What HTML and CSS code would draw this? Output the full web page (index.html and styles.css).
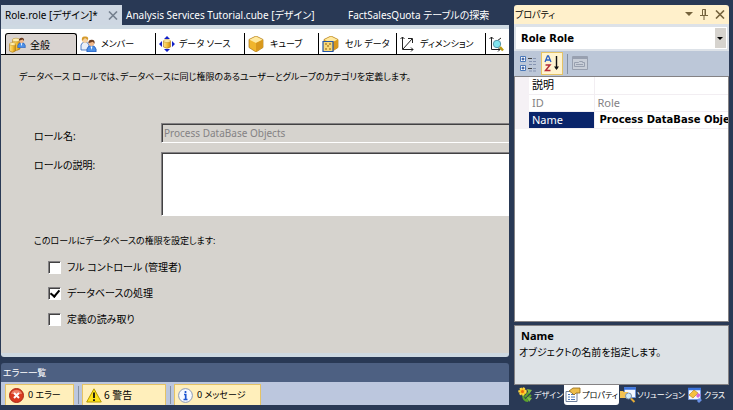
FILE: index.html
```html
<!DOCTYPE html>
<html lang="ja">
<head>
    <meta charset="UTF-8">
    <meta name="viewport" content="width=device-width, initial-scale=1.0">
    <title>Role.role [デザイン]</title>
    <link rel="stylesheet" href="styles.css">
</head>
<body>

<!-- Shared icons -->
<svg class="icon-defs" aria-hidden="true">
    <defs>
        <linearGradient id="gold" x1="0" x2="1">
            <stop offset="0" stop-color="#fbe28a"/>
            <stop offset="0.5" stop-color="#f6c33c"/>
            <stop offset="1" stop-color="#c88a10"/>
        </linearGradient>
        <symbol id="cube" viewBox="0 0 16 16">
            <path d="M8 0l7 3.500v8L8 16l-7-4.500v-8z" fill="#f0b52c" stroke="#a87414" stroke-width=".7"/>
            <path d="M8 .5l6.500 3.200L8 7 1.500 3.700z" fill="#ffe9a0"/>
            <path d="M8 7l6.700-3.300v7.600L8 15.500z" fill="#d9981c"/>
        </symbol>
        <symbol id="user" viewBox="0 0 12 14">
            <path d="M1 14v-3q1-4 5-4t5 4v3z" fill="#4c8fe6" stroke="#1d55b5" stroke-width=".8"/>
            <path d="M5 8h2l-1 4z" fill="#fff"/>
            <circle cx="6" cy="4.500" r="3" fill="#f2b98b"/>
            <path d="M2.500 4.500Q2.500.5 6.500.7 10 1 9.300 5L7.500 3z" fill="#6d3d22"/>
        </symbol>
    </defs>
</svg>

<main class="workspace">
    <section class="document">
        <nav class="doc-tabs">
            <button class="doc-tab active">Role.role [デザイン]*
                <svg width="10" height="9" viewBox="0 0 10 9"><path d="M1 .5l8 8M9 .5l-8 8" stroke="#75808f" stroke-width="1.600"/></svg>
            </button>
            <button class="doc-tab cube-tab">Analysis Services Tutorial.cube [デザイン]</button>
            <button class="doc-tab">FactSalesQuota テーブルの探索</button>
        </nav>

        <div class="designer">
            <div class="page-tabs">
                <button class="page-tab general active">
                    <svg width="17" height="16" viewBox="0 0 17 16">
                        <path d="M3.500 3v9q3.500 3 7.500 0V3z" fill="url(#gold)" stroke="#a87414" stroke-width=".6"/>
                        <ellipse cx="7" cy="3" rx="3.700" ry="1.800" fill="#fff0b0" stroke="#b98a20" stroke-width=".5"/>
                        <path d="M.5 7v7q3 2.500 6 0V7z" fill="url(#gold)" stroke="#a87414" stroke-width=".6"/>
                        <ellipse cx="3.500" cy="7" rx="3" ry="1.500" fill="#fff0b0" stroke="#b98a20" stroke-width=".5"/>
                        <use href="#user" x="8" y="0" width="9" height="11"/>
                    </svg>
                    全般
                </button>
                <button class="page-tab members">
                    <svg width="17" height="16" viewBox="0 0 17 16">
                        <path d="M1 14V9q1-3 4-3t4 3v5z" fill="#e8eef8" stroke="#2860b8" stroke-width=".8"/>
                        <circle cx="5" cy="4" r="3" fill="#f6d2a4"/>
                        <path d="M2 5Q1 0 5 .5 9 0 8 4L5 2z" fill="#d59b2c"/>
                        <use href="#user" x="6" y="3" width="11" height="13"/>
                    </svg>
                    メンバー
                </button>
                <button class="page-tab source">
                    <svg width="16" height="16" viewBox="0 0 16 16">
                        <path d="M8 0l3 3H5zM8 16l3-3H5zM0 8l3-3v6zM16 8l-3-3v6z" fill="#1220c8"/>
                        <path d="M4.500 5v6q3.500 2.500 7 0V5z" fill="url(#gold)" stroke="#a87414" stroke-width=".6"/>
                        <ellipse cx="8" cy="5" rx="3.500" ry="1.400" fill="#fff0b0" stroke="#b98a20" stroke-width=".5"/>
                    </svg>
                    データ ソース
                </button>
                <button class="page-tab cubes">
                    <svg width="16" height="16"><use href="#cube"/></svg>
                    キューブ
                </button>
                <button class="page-tab cells">
                    <svg width="17" height="16" viewBox="0 0 17 16">
                        <use href="#cube" x="1" width="16" height="16"/>
                        <path d="M1 5.500h10v10H1z" fill="#f8d878" stroke="#2456a8" stroke-width="1.200"/>
                        <path d="M3 8h2M7 8h2M5 10h2M3 13h2M7 13h2" stroke="#8a5c10" stroke-width="1.200"/>
                    </svg>
                    セル データ
                </button>
                <button class="page-tab dimension">
                    <svg width="14" height="16" viewBox="0 0 14 16" fill="none" stroke="#222">
                        <path d="M2.500 1v12.500H13M.5 3l2-2 2 2M11 11.500l2 2-2 2M3 13l9-10M8 2.500h4.500V7"/>
                    </svg>
                    ディメンション
                </button>
                <button class="page-tab more" aria-label="ディメンション データ">
                    <svg width="15" height="16" viewBox="0 0 15 16">
                        <path d="M2.500 1v12.500H11M.5 3l2-2 2 2M9 11.500l2 2-2 2M8 5l4-3" fill="none" stroke="#222"/>
                        <circle cx="8" cy="8" r="3.700" fill="#7fe4ee" stroke="#5897a8"/>
                        <path d="M11 11l3 3.500" stroke="#b89a10" stroke-width="2.400"/>
                    </svg>
                </button>
            </div>

            <form class="role-form">
                <p class="intro">データベース ロールでは、データベースに同じ権限のあるユーザーとグループのカテゴリを定義します。</p>
                <div class="field">
                    <label for="roleName">ロール名:</label>
                    <input type="text" id="roleName" value="Process DataBase Objects" disabled>
                </div>
                <div class="field">
                    <label for="roleDescription">ロールの説明:</label>
                    <textarea id="roleDescription"></textarea>
                </div>
                <fieldset class="permissions">
                    <legend>このロールにデータベースの権限を設定します:</legend>
                    <label><input type="checkbox"> フル コントロール (管理者)</label>
                    <label><input type="checkbox" checked> データベースの処理</label>
                    <label><input type="checkbox"> 定義の読み取り</label>
                </fieldset>
            </form>
        </div>
    </section>

    <section class="error-list">
        <h2>エラー一覧</h2>
        <div class="error-bar">
            <button class="filter errors">
                <svg width="15" height="15" viewBox="0 0 15 15">
                    <circle cx="7.500" cy="7.500" r="7" fill="#d83a20" stroke="#a82a18"/>
                    <path d="M2 6q1-4 5.500-4T13 6z" fill="#ee8068"/>
                    <path d="M5 5l5 5M10 5l-5 5" stroke="#fff" stroke-width="2"/>
                </svg>
                0 エラー
            </button>
            <button class="filter warnings">
                <svg width="16" height="15" viewBox="0 0 16 15">
                    <path d="M8 .8L15.300 14H.7z" fill="#ffe31a" stroke="#b59a00" stroke-linejoin="round"/>
                    <path d="M8 4.500V10M8 11.200v1.800" stroke="#111" stroke-width="1.800"/>
                </svg>
                6 警告
            </button>
            <button class="filter messages">
                <svg width="15" height="15" viewBox="0 0 15 15">
                    <circle cx="7.500" cy="7.500" r="6.900" fill="#f6f9ff" stroke="#8b98b4"/>
                    <path d="M7.500 3v2M6 6.500h1.700V11M5.500 11.500h4" fill="none" stroke="#1d55d0" stroke-width="1.700"/>
                </svg>
                0 メッセージ
            </button>
        </div>
    </section>
</main>

<aside class="properties">
    <header class="panel-title">
        <h2>プロパティ</h2>
        <button aria-label="メニュー"><svg width="8" height="5"><path d="M0 0h8L4 4z" fill="#75633d"/></svg></button>
        <button aria-label="ピン留め"><svg width="8" height="11" viewBox="0 0 8 11" fill="none" stroke="#75633d"><path d="M2.500 6V.5h3V6M5 0v6M0 6.500h8M4 7v4"/></svg></button>
        <button aria-label="閉じる"><svg width="10" height="9" viewBox="0 0 10 9"><path d="M1 .5l8 8M9 .5l-8 8" stroke="#75633d" stroke-width="1.600"/></svg></button>
    </header>

    <div class="object-picker">
        <select aria-label="オブジェクト"><option>Role Role</option></select>
    </div>

    <div class="prop-tools">
        <button aria-label="項目別">
            <svg width="17" height="16" viewBox="0 0 17 16">
                <path d="M.5.500h5v5h-5zM.5 9.500h5v5h-5z" fill="#fff" stroke="#4a78b8"/>
                <path d="M1.500 3h3M3 1.500v3M1.500 12h3M3 10.500v3" stroke="#123a88"/>
                <path d="M8 2.500h4M8 12.500h4" stroke="#444"/>
                <path d="M9 5.500h3M9 8.500h3M13 2.500h3M13 5.500h3M13 8.500h3M13 12.500h3M9 15h3M13 15h3" stroke="#8795b2"/>
            </svg>
        </button>
        <button class="pressed" aria-label="アルファベット順">
            <svg width="16" height="17" viewBox="0 0 16 17" fill="none">
                <path d="M1 7l2.500-6h1L7 7M2 5h4" stroke="#2a5fc4" stroke-width="1.300"/>
                <path d="M1.500 10H6l-4.500 5.500h5" stroke="#b52d38" stroke-width="1.500"/>
                <path d="M12.500 1v13" stroke="#111" stroke-width="1.400"/>
                <path d="M10 11.500h5L12.500 15z" fill="#111"/>
            </svg>
        </button>
        <span class="divider"></span>
        <button aria-label="プロパティ ページ" disabled>
            <svg width="16" height="15" viewBox="0 0 16 15" fill="none" stroke="#98a0b0">
                <path d="M.5.500h15v13H.5z" fill="#c8ced8"/>
                <path d="M1 2h14" stroke-width="2"/>
                <path d="M2.500 6.500h4l1-1h3v1h2v4h-10zM4 8.500h7"/>
            </svg>
        </button>
    </div>

    <div class="prop-grid">
        <table>
            <tr><th>説明</th><td></td></tr>
            <tr class="readonly"><th>ID</th><td>Role</td></tr>
            <tr class="selected"><th>Name</th><td>Process DataBase Objects</td></tr>
        </table>
    </div>

    <div class="prop-help">
        <h3>Name</h3>
        <p>オブジェクトの名前を指定します。</p>
    </div>

    <nav class="panel-tabs">
        <button>
            <svg width="15" height="16" viewBox="0 0 15 16">
                <path d="M5 7q0 7 5 7M7 10l5-6M8 13l5-5" fill="none" stroke="#5ba32c" stroke-width="2"/>
                <path d="M9 2l5 1-3 4zM9 10l5 1-3 4z" fill="#80bb48"/>
                <circle cx="4.500" cy="4.500" r="3.200" fill="#ffbd18" stroke="#ffda40" stroke-width="2" stroke-dasharray="2 1"/>
                <circle cx="4.500" cy="4.500" r="1.500" fill="#e56a10"/>
            </svg>
            デザイン
        </button>
        <button class="active">
            <svg width="16" height="16" viewBox="0 0 16 16">
                <path d="M1 4.500h11v10H1z" fill="#fff" stroke="#6e7f9c"/>
                <path d="M3 7.500h2M6 7.500h4M3 10h2M6 10h4M3 12.500h2M6 12.500h4" stroke="#4b76b8"/>
                <path d="M4 4l4-3h7v5h-4L9 8 7 6z" fill="#edbd4c" stroke="#916817" stroke-width=".8"/>
            </svg>
            プロパティ
        </button>
        <button>
            <svg width="16" height="16" viewBox="0 0 16 16">
                <path d="M4.500.500h11v10h-11z" fill="#f4f8ff" stroke="#7296d8"/>
                <path d="M4 1.500h12" stroke="#3c74dc" stroke-width="2.500"/>
                <path d="M0 4h3l1 1h4v6H0z" fill="#f2c252"/>
                <circle cx="8.500" cy="9" r="3" fill="#cdeafb" stroke="#7b8fa8"/>
                <path d="M11 11.500l3.500 3.500" stroke="#e5ac37" stroke-width="2"/>
            </svg>
            ソリューション
        </button>
        <button>
            <svg width="16" height="16" viewBox="0 0 16 16">
                <path d="M1.500 1.500h12v11h-12z" fill="#f4f8ff" stroke="#7296d8"/>
                <path d="M1 2h13" stroke="#3c74dc" stroke-width="2.500"/>
                <path d="M7 3l4 3-5 5-4-3z" fill="#f5c040" stroke="#b07a18" stroke-width=".6"/>
                <path d="M11 6l3 2-3 3-2-2z" fill="#d66ad8"/>
                <path d="M12 11l3 2-3 3-2-2z" fill="#6a92e8"/>
            </svg>
            クラス
        </button>
    </nav>
</aside>

</body>
</html>
```
FILE: styles.css
```css
* {
    box-sizing: border-box;
}
body {
    display: flex;
    gap: 5px;
    height: 100vh;
    margin: 0;
    padding: 5px 4px 5px 1px;
    overflow: hidden;
    background-color: #293955;
    color: #000;
    font-family: "Noto Sans", "Noto Sans CJK JP", sans-serif;
    font-size: 11px;
    line-height: 16px;
    font-feature-settings: "palt";
}
h2, h3, p {
    margin: 0;
    font-size: 9px;
    font-weight: normal;
}
button {
    display: flex;
    align-items: center;
    gap: 4px;
    padding: 0;
    border: none;
    background: none;
    color: inherit;
    font: inherit;
    font-feature-settings: inherit;
    white-space: nowrap;
}
svg {
    flex: none;
}
.icon-defs {
    position: absolute;
    width: 0;
    height: 0;
}

/* Left side */
.workspace {
    flex: 1;
    min-width: 0;
    display: flex;
    flex-direction: column;
    gap: 6px;
}
.document {
    flex: 1;
    min-height: 0;
    display: flex;
    flex-direction: column;
}
.doc-tabs {
    display: flex;
    height: 20px;
    color: #fff;
    font-size: 10px;
}
.doc-tab {
    padding: 0 4px;
}
.doc-tab.active {
    width: 121px;
    justify-content: space-between;
    background-color: #ced7e2;
    color: #000;
}
.cube-tab {
    width: 222px;
}
.designer {
    flex: 1;
    display: flex;
    flex-direction: column;
    border: solid #ced9e2;
    border-width: 4px 0;
    border-radius: 0 0 3px 3px;
    background-color: #d6d3ce;
}
.page-tabs {
    display: flex;
    height: 26px;
    padding-top: 4px;
    border-bottom: 1px solid #000;
    background-color: #fff;
    overflow: hidden;
}
.page-tab {
    flex: none;
    height: 21px;
    padding-left: 3px;
    border-right: 1px solid #000;
    font-size: 9px;
}
.page-tab.general {
    width: 72px;
    height: 22px;
    margin-left: 4px;
    border: 1px solid #000;
    border-bottom: none;
    border-radius: 3px 3px 0 0;
    background-color: #d9d3d0;
    font-size: 10px;
}
.members {
    width: 79px;
}
.source {
    width: 89px;
}
.cubes {
    width: 74px;
}
.cells {
    width: 78px;
}
.dimension {
    width: 89px;
}
.cubes, .cells, .dimension {
    gap: 6px;
}
.page-tab.more {
    border-right: none;
}

/* Role form */
.role-form {
    padding: 14px 0 0 18px;
    font-size: 10px;
}
.intro {
    margin-bottom: 38px;
    white-space: nowrap;
}
.field {
    display: flex;
    margin: 0 0 8px 15px;
}
.field label {
    width: 127px;
    padding-top: 5px;
}
.field input, .field textarea {
    flex: 1;
    min-width: 0;
    height: 20px;
    margin: 0;
    padding: 0 1px;
    border: 2px solid;
    border-color: #848284 #fff #fff #848284;
    border-width: 1px 0 1px 1px;
    border-radius: 0;
    box-shadow: inset 1px 1px #424142;
    background-color: #fff;
    font: inherit;
    resize: none;
}
.field input {
    padding-left: 2px;
    background-color: #d6d3ce;
    color: #848284;
    font-size: 10px;
}
.field textarea {
    height: 64px;
}
.permissions {
    margin: 17px 0 0 15px;
    padding: 0;
    border: none;
}
.permissions legend {
    padding: 0;
    font-size: 9px;
}
.permissions label {
    display: flex;
    align-items: center;
    gap: 6px;
    margin: 10px 0 0 14px;
}
.permissions input {
    appearance: none;
    display: grid;
    place-items: center;
    width: 13px;
    height: 13px;
    margin: 0;
    border: 1px solid;
    border-color: #848284 #fff #fff #848284;
    box-shadow: inset 1px 1px #424142;
    background-color: #fff;
}
.permissions input:checked::after {
    content: "";
    width: 4px;
    height: 7px;
    margin-bottom: 2px;
    border: solid #000;
    border-width: 0 2px 2px 0;
    transform: rotate(40deg);
}

/* Error list */
.error-list h2 {
    height: 19px;
    padding-left: 2px;
    border-radius: 3px 3px 0 0;
    background-color: #4d6082;
    color: #fff;
    line-height: 19px;
}
.error-bar {
    display: flex;
    height: 23px;
    padding: 2px 4px 0;
    background-color: #bcc7de;
}
.filter {
    padding-left: 3px;
    border: 1px solid #e5c365;
    border-bottom: none;
    background-color: #ffefbb;
    font-size: 9px;
}
.filter + .filter {
    position: relative;
    margin-left: 8px;
}
.filter + .filter::before {
    content: "";
    position: absolute;
    top: 1px;
    bottom: 1px;
    left: -5px;
    border-left: 1px solid #8591a2;
}
.errors {
    width: 69px;
}
.warnings {
    width: 84px;
    gap: 2px;
    font-size: 10px;
}
.messages {
    width: 87px;
}

/* Properties panel */
.properties {
    width: 215px;
    display: flex;
    flex-direction: column;
}
.panel-title {
    display: flex;
    align-items: center;
    gap: 7px;
    height: 19px;
    padding: 0 4px 0 1px;
    border-radius: 3px 3px 0 0;
    background-color: #fff0cb;
}
.panel-title h2 {
    flex: 1;
}
.object-picker {
    position: relative;
    display: flex;
    padding: 3px 2px 2px;
    background-color: #dde2e8;
}
.object-picker select {
    flex: 1;
    height: 22px;
    padding: 0 4px;
    appearance: none;
    border: 1px solid #fff;
    border-radius: 0;
    background: linear-gradient(#d6d3ce, #d6d3ce) right / 11px 100% no-repeat #fff;
    color: #000;
    font: bold 10px "DejaVu Sans", sans-serif;
}
.object-picker::after {
    content: "";
    position: absolute;
    top: 13px;
    right: 6px;
    border: 3px solid transparent;
    border-top-color: #000;
    border-bottom: none;
}
.prop-tools {
    display: flex;
    align-items: center;
    gap: 4px;
    height: 25px;
    padding-left: 6px;
    background-color: #bcc7d8;
}
.prop-tools .pressed {
    padding: 2px;
    border: 1px solid #e5c365;
    background-color: #fff3cf;
}
.divider {
    height: 20px;
    border-left: 1px solid #8591a2;
}
.prop-grid {
    flex: 1;
    min-height: 0;
    overflow: hidden;
    border: 1px solid #848284;
    background: #fff;
}
.prop-grid table {
    width: 100%;
    table-layout: fixed;
    border-collapse: collapse;
    border-left: 14px solid #f5f1f5;
}
.prop-grid th, .prop-grid td {
    height: 17px;
    padding: 0 3px;
    border: solid #f2eef2;
    border-width: 0 0 1px 1px;
    line-height: 16px;
    font-weight: normal;
    text-align: left;
    white-space: nowrap;
    overflow: hidden;
}
.prop-grid th {
    width: 72px;
}
.readonly {
    color: #848284;
}
.selected th {
    background-color: #0a246a;
    color: #fff;
}
.prop-grid .selected td {
    padding-left: 5px;
    font-family: "DejaVu Sans", sans-serif;
    font-size: 10px;
    font-weight: bold;
}
.prop-help {
    height: 60px;
    margin-top: 3px;
    padding: 2px 4px;
    border: 1px solid #848284;
    background-color: #dde2e6;
}
.prop-help h3 {
    padding-left: 2px;
    font-size: 11px;
    font-weight: bold;
}
.prop-help p {
    font-size: 10px;
}
.panel-tabs {
    display: flex;
    height: 20px;
    padding-left: 3px;
    color: #fff;
}
.panel-tabs button {
    flex: none;
    gap: 1px;
    padding: 0 1px;
    font-size: 8px;
}
.panel-tabs .active {
    border-radius: 0 0 3px 3px;
    background-color: #fff;
    color: #000;
}
```
